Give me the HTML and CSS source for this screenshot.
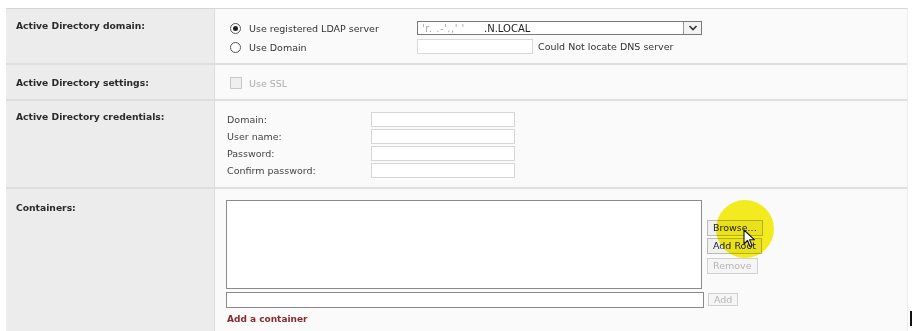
FILE: index.html
```html
<!DOCTYPE html>
<html>
<head>
<meta charset="utf-8">
<link rel="stylesheet" href="styles.css">
</head>
<body>
<div class="form">
  <div class="row r1">
    <div class="label">Active Directory domain:</div>
    <div class="value">
      <div class="dom">
        <div class="radios">
          <div class="opt"><span class="radio on"></span>Use registered LDAP server</div>
          <div class="opt"><span class="radio"></span>Use Domain</div>
        </div>
        <div class="fields">
          <div class="select"><span class="blur">'r. .-'.,' '</span><span class="local">.N.LOCAL</span><span class="arrow"><svg width="10" height="6" viewBox="0 0 10 6"><path d="M1.5 1 L5 4.5 L8.5 1" fill="none" stroke="#333" stroke-width="1.6"/></svg></span></div>
          <div class="dnsline"><span class="tinput"></span><span class="dns">Could Not locate DNS server</span></div>
        </div>
      </div>
    </div>
  </div>
  <div class="row r2">
    <div class="label">Active Directory settings:</div>
    <div class="value"><div class="ssl"><span class="check"></span>Use SSL</div></div>
  </div>
  <div class="row r3">
    <div class="label">Active Directory credentials:</div>
    <div class="value">
      <div class="creds">
        <span class="clabel">Domain:</span><span class="cinput"></span>
        <span class="clabel">User name:</span><span class="cinput"></span>
        <span class="clabel">Password:</span><span class="cinput"></span>
        <span class="clabel">Confirm password:</span><span class="cinput"></span>
      </div>
    </div>
  </div>
  <div class="row r4">
    <div class="label">Containers:</div>
    <div class="value">
      <div class="cont">
        <div class="area"></div>
        <div class="btns">
          <span class="btn">Browse...</span>
          <span class="btn">Add Root</span>
          <span class="btn dis">Remove</span>
        </div>
        <div class="line"></div>
        <div class="addcol"><span class="btn dis">Add</span></div>
      </div>
      <div class="addlink">Add a container</div>
    </div>
  </div>
</div>
<div class="hilite"></div>
<svg class="cursor" width="14" height="20" viewBox="0 0 14 20"><path d="M1 1 L1 15 L4.5 11.5 L7 17.5 L9 16.6 L6.6 10.8 L11.5 10.8 Z" fill="#fff" stroke="#111" stroke-width="1.1" stroke-linejoin="round"/></svg>
<div class="caret"></div>
</body>
</html>
```
FILE: styles.css
```css
html, body { margin: 0; padding: 0; background: #fff; overflow: hidden; }
body { width: 916px; height: 331px; position: relative; font-family: "DejaVu Sans", Verdana, sans-serif; font-size: 9.5px; color: #333; }
.form { margin: 8px 0 0 6px; width: 901px; border-top: 1px solid #d6d6d6; border-right: 1px solid #ececec; }
.row { display: grid; grid-template-columns: 209px 1fr; border-bottom: 2px solid #dedede; }
.label { background: #ececec; border-right: 1px solid #dcdcdc; font-weight: bold; color: #2a2a2a; padding: 11px 0 0 10px; font-size: 9.2px; }
.value { background: #fafafa; }
.r1 { height: 54px; }
.r2 { height: 34px; }
.r2 .label { padding-top: 12px; }
.r3 { height: 86px; }
.r3 .label { padding-top: 10px; }
.r4 { height: 150px; border-bottom: none; }
.r4 .label { padding-top: 13px; }

.dom { display: flex; padding: 12px 0 0 15px; }
.radios { display: flex; flex-direction: column; gap: 5px; width: 187px; }
.opt { display: flex; align-items: center; height: 14px; color: #333; }
.radio { width: 11px; height: 11px; border: 1px solid #555; border-radius: 50%; margin-right: 8px; box-sizing: border-box; position: relative; background: #fff; }
.radio.on::after { content: ""; position: absolute; left: 2px; top: 2px; width: 5px; height: 5px; background: #222; border-radius: 50%; }
.fields { display: flex; flex-direction: column; gap: 4px; }
.select { width: 285px; height: 14px; box-sizing: border-box; border: 1px solid #777; background: #fff; display: flex; align-items: center; position: relative; font-size: 10px; color: #222; }
.blur { color: #aaa; letter-spacing: 0.5px; padding-left: 4px; width: 62px; overflow: hidden; white-space: nowrap; }
.arrow { position: absolute; right: 0; top: 0; width: 17px; height: 12px; border-left: 1px solid #999; display: flex; align-items: center; justify-content: center; background: #f3f3f3; }
.dnsline { display: flex; align-items: center; }
.tinput { width: 116px; height: 15px; box-sizing: border-box; border: 1px solid #d8d8d8; background: #fff; margin-right: 5px; }
.dns { color: #333; }

.ssl { display: flex; align-items: center; padding: 12px 0 0 15px; color: #aaa; }
.check { width: 12px; height: 12px; box-sizing: border-box; border: 1px solid #c8c8c8; background: #efefef; margin-right: 7px; }

.creds { display: grid; grid-template-columns: 144px 144px; row-gap: 2px; padding: 11px 0 0 12px; align-items: center; }
.clabel { color: #444; }
.cinput { height: 15px; box-sizing: border-box; border: 1px solid #d6d6d6; background: #fff; }

.cont { display: grid; grid-template-columns: 476px 60px; column-gap: 5px; row-gap: 3px; padding: 11px 0 0 11px; }
.area { height: 89px; box-sizing: border-box; border: 1px solid #8a8a8a; background: #fff; }
.btns { display: flex; flex-direction: column; align-items: flex-start; gap: 2px; padding-top: 20px; }
.btn { height: 16px; box-sizing: border-box; border: 1px solid #bbb; background: #f0f0f0; padding: 0 5px; line-height: 14px; color: #222; font-size: 9.5px; }
.btns .btn.dis { margin-top: 2px; }
.btn.dis { color: #b5b5b5; border-color: #d0d0d0; background: #f5f5f5; }
.line { height: 16px; width: 478px; box-sizing: border-box; border: 1px solid #8a8a8a; background: #fff; }
.addcol { padding-top: 1px; padding-left: 1px; }
.addlink { color: #8a2a2a; font-weight: bold; padding: 6px 0 0 12px; font-size: 9px; }

.hilite { position: absolute; left: 716px; top: 200px; width: 58px; height: 58px; border-radius: 50%; background: #f8ef20; mix-blend-mode: multiply; }
.cursor { position: absolute; left: 743px; top: 229px; }
.caret { position: absolute; left: 910px; top: 311px; width: 2px; height: 15px; background: #111; }
```
